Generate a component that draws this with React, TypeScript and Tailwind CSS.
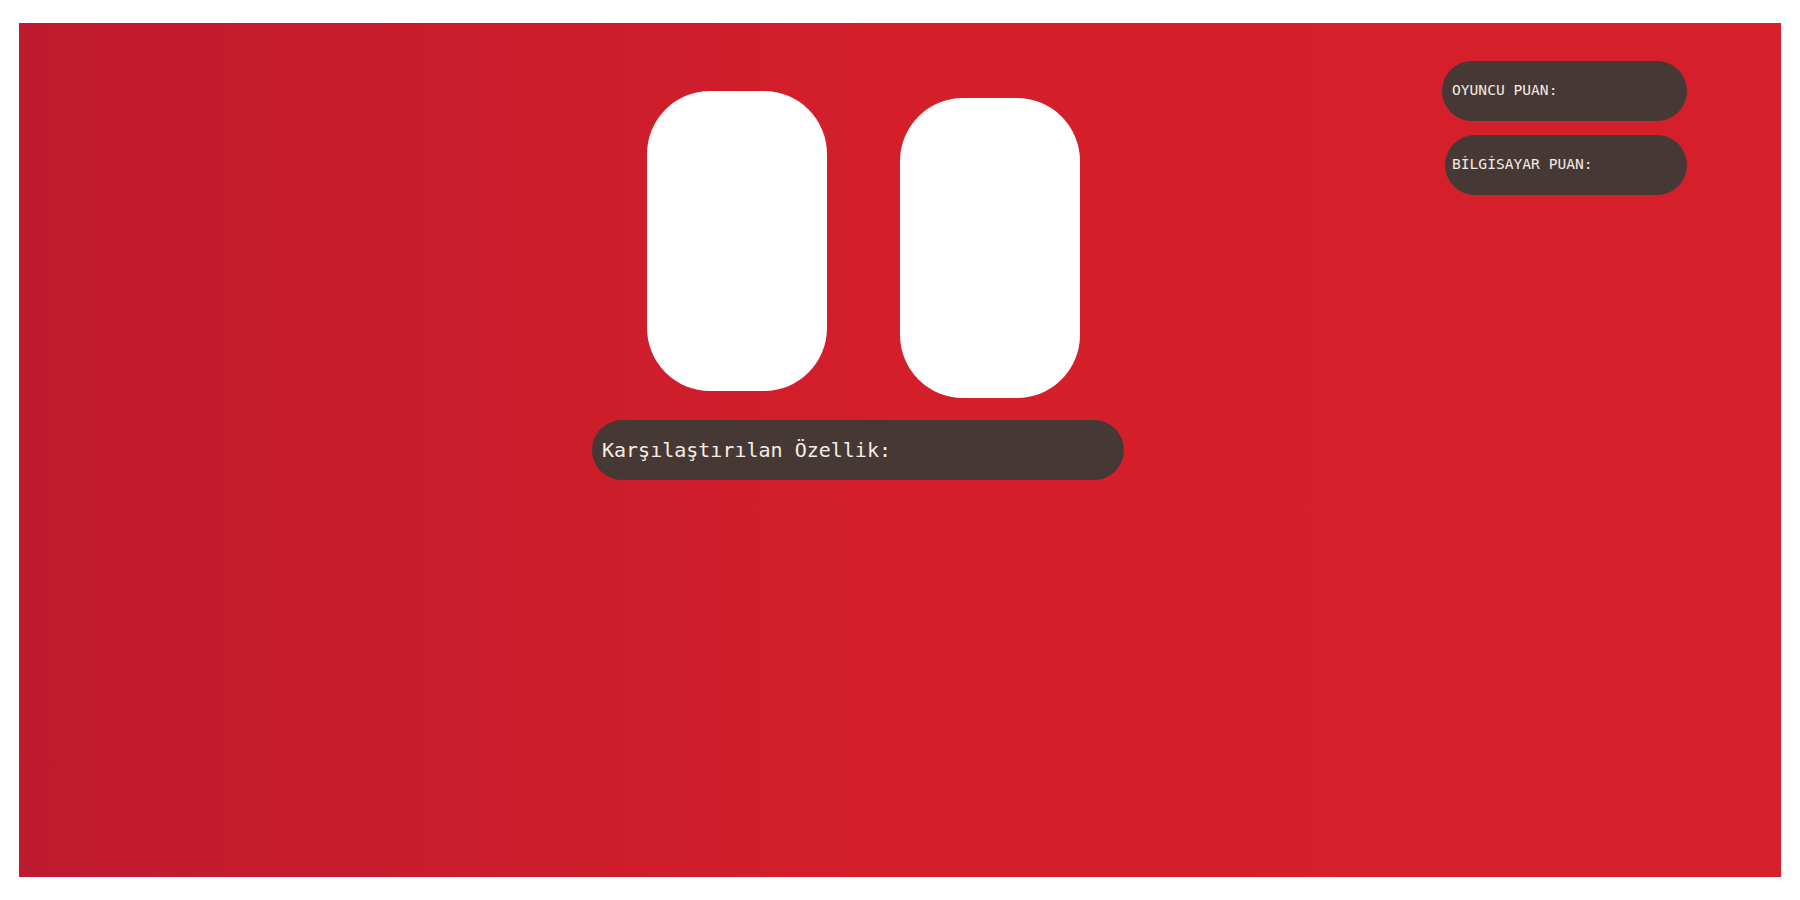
const monoFont = "font-['DejaVu_Sans_Mono','Liberation_Mono',monospace]";

function Card({className = ''}: {className?: string}) {
  return <div className={`h-[300px] w-[180px] rounded-[63px] bg-white ${className}`} />;
}

export default function App() {
  return (
    <div className="min-h-screen w-full bg-white pl-[19px] pr-[19px] pt-[23px]">
      <div className="flex h-[854px] w-[1762px] items-start bg-[linear-gradient(to_right,#bf1a2f,#d41f2a_50%,#d61f2a)]">
        <div className="ml-[573px] mt-[68px] flex flex-col">
          <div className="ml-[55px] flex items-start gap-[73px]">
            <Card />
            <Card className="mt-[7px]" />
          </div>
          <div
            className={`mt-[22px] flex h-[60px] w-[532px] items-center rounded-[30px] bg-[#463935] pl-[10px] text-[20px] text-[#f5eee4] ${monoFont}`}
          >
            Karşılaştırılan Özellik:
          </div>
        </div>

        <div className={`ml-auto mr-[94px] mt-[38px] flex flex-col items-end gap-[14px] text-[14.6px] font-normal text-[#f2ebe3] ${monoFont}`}>
          <div className="flex h-[60px] w-[245px] items-start rounded-[30px] bg-[#463935] pl-[10px] pt-[18px]">
            OYUNCU PUAN:
          </div>
          <div className="flex h-[60px] w-[242px] items-start rounded-[30px] bg-[#463935] pl-[7px] pt-[18px]">
            BİLGİSAYAR PUAN:
          </div>
        </div>
      </div>
    </div>
  );
}
